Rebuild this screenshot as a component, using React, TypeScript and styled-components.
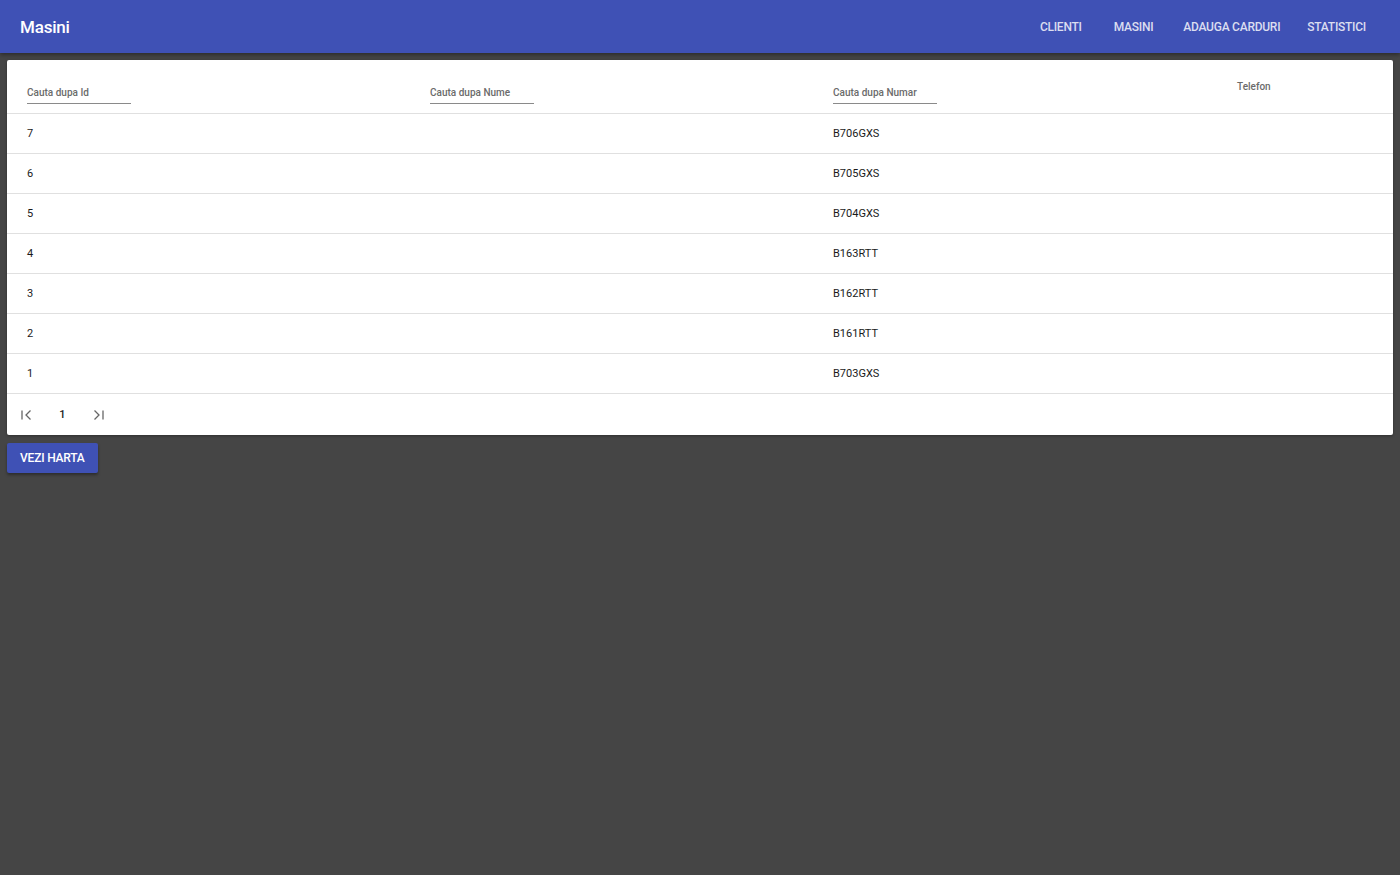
import React from "react";
import styled, { createGlobalStyle } from "styled-components";

const Global = createGlobalStyle`
  html, body { margin: 0; padding: 0; background: #454545; }
  body { font-family: Roboto, "Liberation Sans", Arial, sans-serif; }
  * { box-sizing: border-box; }
`;

const Page = styled.div`
  min-height: 875px;
  background: #454545;
`;

const AppBar = styled.header`
  height: 53px;
  background: #3f51b5;
  display: flex;
  align-items: center;
  justify-content: space-between;
  padding: 0 20px;
  box-shadow: 0 2px 4px rgba(0, 0, 0, 0.35);
  position: relative;
  z-index: 1;
`;

const Title = styled.div`
  color: #fff;
  font-size: 17px;
  font-weight: 500;
  letter-spacing: -0.2px;
`;

const Nav = styled.nav`
  display: flex;
  align-items: center;
  margin-right: 14px;
`;

const NavLink = styled.a<{ $space?: number }>`
  color: rgba(255, 255, 255, 0.82);
  font-size: 12px;
  font-weight: 500;
  text-transform: uppercase;
  margin-left: ${(p) => p.$space ?? 0}px;
  letter-spacing: -0.25px;
`;

const Main = styled.main`
  padding: 7px 7px;
`;

const Card = styled.section`
  background: #fff;
  border-radius: 2px;
  box-shadow: 0 1px 3px rgba(0, 0, 0, 0.3);
  overflow: hidden;
`;

const Grid = styled.div`
  display: grid;
  grid-template-columns: 403px 403px 404px 1fr;
  padding-left: 20px;
`;

const HeadRow = styled(Grid)`
  height: 54px;
  border-bottom: 1px solid #e0e0e0;
`;

const HeadCell = styled.div<{ $plain?: boolean }>`
  display: flex;
  flex-direction: column;
  justify-content: ${(p) => (p.$plain ? "flex-start" : "flex-end")};
  padding-top: ${(p) => (p.$plain ? "21px" : "0")};
  padding-bottom: ${(p) => (p.$plain ? "0" : "9px")};
`;

const FilterLabel = styled.label`
  display: block;
  width: 104px;
  font-size: 10px;
  font-weight: 500;
  color: #6b6b6b;
  padding-bottom: 5px;
  border-bottom: 1px solid #8a8a8a;
`;

const ColumnTitle = styled.span`
  font-size: 10px;
  font-weight: 500;
  color: #6b6b6b;
`;

const Row = styled(Grid)`
  height: 40px;
  align-items: center;
  border-bottom: 1px solid #e0e0e0;
`;

const Cell = styled.div`
  font-size: 11px;
  color: #1a1a1a;
`;

const Pager = styled.div`
  height: 41px;
  display: flex;
  align-items: center;
  padding-left: 8px;
`;

const PageButton = styled.button`
  width: 24px;
  height: 24px;
  border: none;
  background: transparent;
  padding: 0;
  display: flex;
  align-items: center;
  justify-content: center;
  color: #666;
`;

const PageNumber = styled.span`
  width: 47px;
  text-align: center;
  font-size: 11px;
  font-weight: 500;
  color: #1a1a1a;
`;

const Actions = styled.div`
  padding-top: 8px;
`;

const RaisedButton = styled.button`
  height: 30px;
  padding: 0 13px;
  border: none;
  border-radius: 2px;
  background: #3f51b5;
  color: #fff;
  font-family: inherit;
  font-size: 12px;
  font-weight: 500;
  letter-spacing: -0.2px;
  text-transform: uppercase;
  box-shadow: 0 2px 3px rgba(0, 0, 0, 0.35);
`;

const FirstIcon = () => (
  <svg width="14" height="14" viewBox="0 0 14 14" fill="none" stroke="currentColor" strokeWidth="1.3">
    <path d="M2 2.5v9" />
    <path d="M10.5 2.5 6 7 10.5 11.5" />
  </svg>
);

const LastIcon = () => (
  <svg width="14" height="14" viewBox="0 0 14 14" fill="none" stroke="currentColor" strokeWidth="1.3">
    <path d="M3.5 2.5 8 7 3.5 11.5" />
    <path d="M12 2.5v9" />
  </svg>
);

const links = [
  { label: "Clienti", space: 0 },
  { label: "Masini", space: 32 },
  { label: "Adauga carduri", space: 30 },
  { label: "Statistici", space: 27 },
];

const cars = [
  { id: 7, plate: "B706GXS" },
  { id: 6, plate: "B705GXS" },
  { id: 5, plate: "B704GXS" },
  { id: 4, plate: "B163RTT" },
  { id: 3, plate: "B162RTT" },
  { id: 2, plate: "B161RTT" },
  { id: 1, plate: "B703GXS" },
];

export default function App() {
  return (
    <Page>
      <Global />
      <AppBar>
        <Title>Masini</Title>
        <Nav>
          {links.map((l) => (
            <NavLink key={l.label} $space={l.space}>{l.label}</NavLink>
          ))}
        </Nav>
      </AppBar>
      <Main>
        <Card>
          <HeadRow>
            <HeadCell><FilterLabel>Cauta dupa Id</FilterLabel></HeadCell>
            <HeadCell><FilterLabel>Cauta dupa Nume</FilterLabel></HeadCell>
            <HeadCell><FilterLabel>Cauta dupa Numar</FilterLabel></HeadCell>
            <HeadCell $plain><ColumnTitle>Telefon</ColumnTitle></HeadCell>
          </HeadRow>
          {cars.map((c) => (
            <Row key={c.id}>
              <Cell>{c.id}</Cell>
              <Cell></Cell>
              <Cell>{c.plate}</Cell>
              <Cell></Cell>
            </Row>
          ))}
          <Pager>
            <PageButton aria-label="first"><FirstIcon /></PageButton>
            <PageNumber>1</PageNumber>
            <PageButton aria-label="last"><LastIcon /></PageButton>
          </Pager>
        </Card>
        <Actions>
          <RaisedButton>Vezi harta</RaisedButton>
        </Actions>
      </Main>
    </Page>
  );
}
